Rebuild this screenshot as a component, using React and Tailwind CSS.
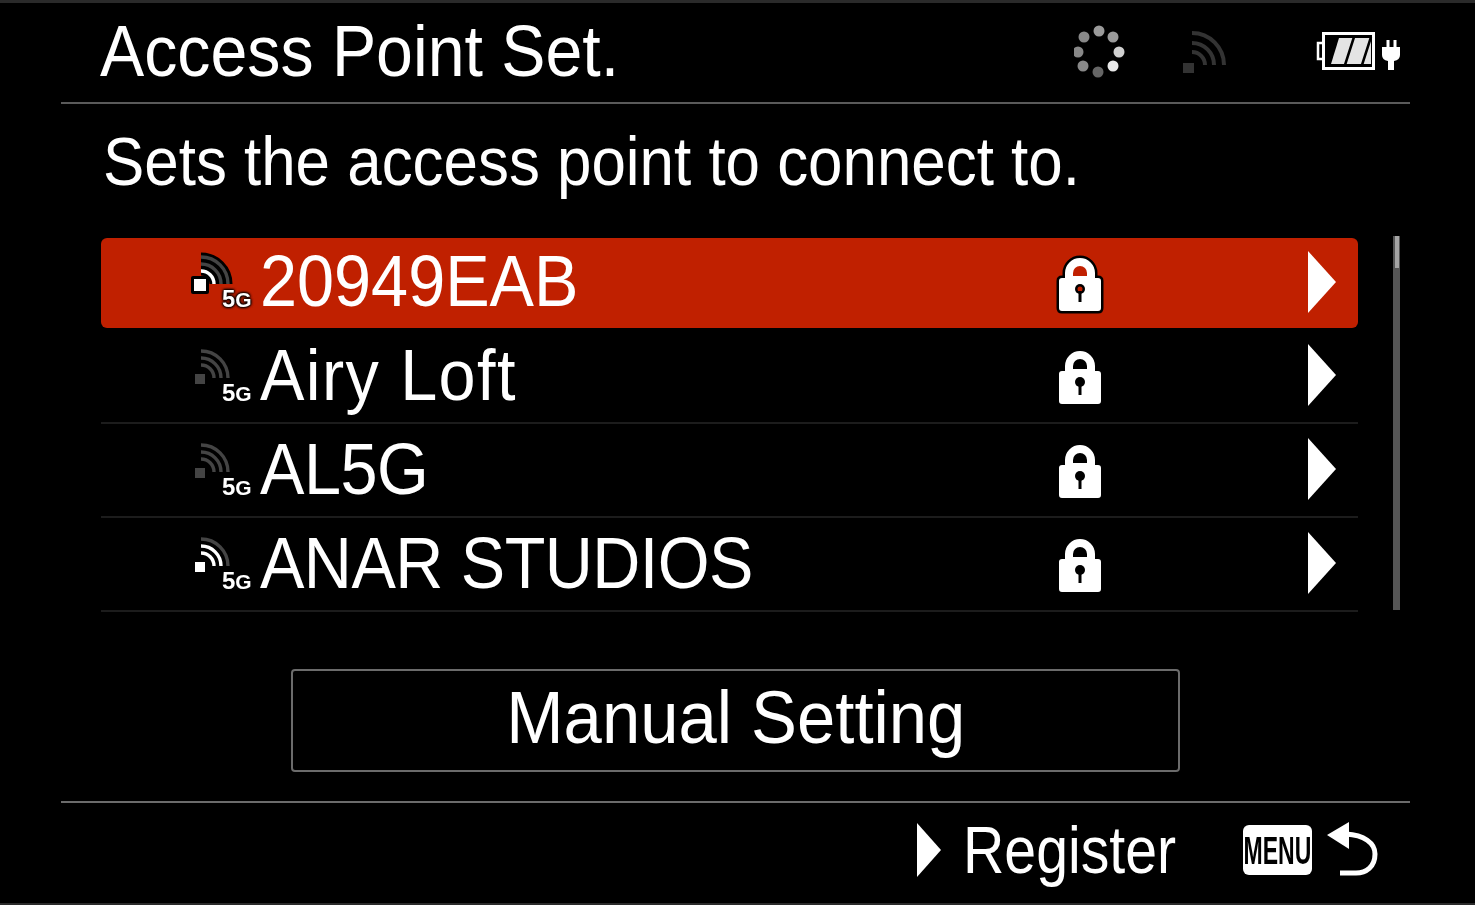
const rows = [
  { name: 'ROW0', label: '20949EAB', bars: 1, active: true },
  { name: 'ROW1', label: 'Airy Loft', bars: 0, spacing: 'tracking-[1.5px]' },
  { name: 'ROW2', label: 'AL5G', bars: 0, spacing: 'tracking-[-0.5px]' },
  { name: 'ROW3', label: 'ANAR STUDIOS', bars: 2, spacing: 'tracking-[-0.6px]' },
];

const Spinner = () => {
  const dots = [
    [25, 6, '#9a9a9a'], [39, 12, '#9a9a9a'], [45, 27, '#d0d0d0'], [39, 41, '#e8e8e8'],
    [24, 47, '#666666'], [9, 41, '#888888'], [4, 27, '#888888'], [10, 12, '#888888'],
  ];
  return (
    <svg width="52" height="56" viewBox="0 0 52 56" className="block">
      {dots.map(([cx, cy, fill]) => <circle key={`${cx}-${cy}`} cx={cx} cy={cy} r="5.5" fill={fill} />)}
    </svg>
  );
};

// arcs radiate from the lower-left dot, lit count depends on signal
const Wifi = ({ lit = 0, outline = false }) => {
  const arcs = ['M12 21 A13 13 0 0 1 25 34', 'M12 14 A20 20 0 0 1 32 34', 'M12 7 A27 27 0 0 1 39 34'];
  return (
    <svg width="46" height="46" viewBox="0 0 46 46" className="block">
      {outline && arcs.map((d) => <path key={d} d={d} fill="none" stroke="#000" strokeWidth="9" />)}
      {outline && <rect x="2" y="26" width="18" height="18" rx="2" fill="#000" />}
      {arcs.map((d, i) => (
        <path key={d} d={d} fill="none" stroke={i < lit ? '#fff' : '#444444'} strokeWidth="3.4" />
      ))}
      {outline
        ? <rect x="5" y="29" width="12" height="12" fill="#fff" />
        : <rect x="6" y="30" width="10" height="10" fill={lit > 0 ? '#fff' : '#444444'} />}
    </svg>
  );
};

const Lock = ({ outline }) => (
  <svg width="52" height="60" viewBox="0 0 52 60" className="block">
    <path
      d="M11 23 V18 A15 15 0 0 1 41 18 V23 H44 Q47 23 47 26 V53 Q47 56 44 56 H8 Q5 56 5 53 V26 Q5 23 8 23 Z"
      fill="#fff"
      stroke={outline ? '#000' : 'none'}
      strokeWidth="5"
      paintOrder="stroke"
    />
    <path d="M19 21 V18 A7 7 0 0 1 33 18 V21 Z" fill={outline ? '#c02000' : '#000'} />
    <circle cx="26" cy="34" r="5" fill="#000" />
    {outline && <circle cx="26" cy="34" r="2.5" fill="#c02000" />}
    <rect x="24.5" y="36" width="3" height="11" fill="#000" />
  </svg>
);

const Arrow = () => (
  <svg width="30" height="62" viewBox="0 0 30 62" className="block">
    <path d="M1 0 L29 31 L1 62 Z" fill="#fff" />
  </svg>
);

const Row = ({ label, bars, active, spacing = '' }) => (
  <div className={`relative isolate flex h-[94px] items-center pb-[2px] ${active ? '' : 'border-b-2 border-[#1c1c1c]'}`}>
    {active && <div className="absolute inset-x-0 inset-y-[2px] -z-10 rounded-md bg-[#c02000]" />}
    <div className="absolute left-[88px] top-[14px]">
      <Wifi lit={bars} outline={active} />
    </div>
    <span className={`absolute left-[121px] top-[50px] text-[24px] leading-[26px] font-bold text-white ${active ? '[text-shadow:0_0_3px_#000,0_0_3px_#000,0_0_3px_#000,0_0_2px_#000]' : ''}`}>
      5<span className="text-[21px]">G</span>
    </span>
    <span className={`ml-[159px] origin-left scale-x-[0.925] text-[72px] leading-none text-white ${active ? '-mt-[2px]' : ''} ${spacing}`}>{label}</span>
    <div className="ml-auto flex items-center">
      <div className="mt-[6px]"><Lock outline={active} /></div>
      <div className="ml-[201px] mr-[21px]"><Arrow /></div>
    </div>
  </div>
);

export default function App() {
  return (
    <div className="flex h-[905px] w-[1475px] flex-col overflow-hidden bg-black font-['Liberation_Sans',sans-serif] text-white blur-[0.5px]">
      <div className="h-[3px] bg-[#2a2a2a]" />

      <div className="ml-[61px] mr-[65px] flex h-[101px] items-center border-b-2 border-[#5a5a5a] pl-[39px]">
        <h1 className="-mt-[3px] origin-left scale-x-[0.92] text-[72px] leading-none">Access Point Set.</h1>
        <div className="ml-auto flex items-center">
          <Spinner />
          <div className="ml-[56px] mr-[88px]">
            <svg width="46" height="46" viewBox="0 0 46 46" className="block">
              <path d="M10 3 A32 32 0 0 1 42 35 M10 13 A22 22 0 0 1 32 35 M10 22 A13 13 0 0 1 23 35" fill="none" stroke="#333333" strokeWidth="4" />
              <rect x="1" y="33" width="11" height="10" fill="#333333" />
            </svg>
          </div>
          <svg width="84" height="38" viewBox="0 0 84 38" className="-mt-[3px] mr-[10px] block">
            <path d="M6 11 H2 V27 H6" fill="none" stroke="#fff" strokeWidth="2.5" />
            <rect x="7.5" y="1.5" width="50" height="35" fill="none" stroke="#fff" strokeWidth="3" />
            <path d="M15 32 L23 6 H55 V32 Z" fill="#e4e4e4" />
            <path d="M29 33 L38 5 M46 33 L55 5" stroke="#000" strokeWidth="2.5" />
            <path d="M72 8 V16 M79 8 V16" stroke="#fff" strokeWidth="3" />
            <path d="M66 15 H84 V23 Q84 28 78 29 V38 H72 V29 Q66 28 66 23 Z" fill="#fff" />
          </svg>
        </div>
      </div>

      <p className="ml-[103px] mt-[21px] h-[72px] origin-left scale-x-[0.91] text-[68px] leading-[72px] whitespace-nowrap">Sets the access point to connect to.</p>

      <div className="ml-[101px] mt-[39px] flex items-stretch">
        <div className="w-[1257px]">
          {rows.map((r) => <Row key={r.name} {...r} />)}
        </div>
        <div className="ml-[35px] h-[374px] w-[7px] bg-[#555555]">
          <div className="mx-auto h-[32px] w-[4px] bg-[#a5a5a5]" />
        </div>
      </div>

      <div className="ml-[291px] mt-[57px] flex h-[103px] w-[889px] items-center justify-center rounded border-2 border-[#6b6b6b] pb-[5px]">
        <span className="scale-x-[0.93] text-[74px] leading-none">Manual Setting</span>
      </div>

      <div className="ml-[61px] mr-[65px] mt-[29px] flex h-[100px] items-center border-t-2 border-[#6b6b6b] pb-[4px]">
        <svg width="26" height="54" viewBox="0 0 26 54" className="ml-[855px] block">
          <path d="M1 0 L25 27 L1 54 Z" fill="#fff" />
        </svg>
        <span className="ml-[21px] origin-left scale-x-[0.867] text-[66px] leading-none">Register</span>
        <span className="ml-[34px] flex h-[50px] w-[69px] items-center justify-center rounded-md bg-white text-[39px] leading-none font-bold text-black">
          <span className="scale-x-[0.59]">MENU</span>
        </span>
        <svg width="56" height="58" viewBox="0 0 56 58" className="ml-[14px] block">
          <path d="M1 14 L23 1 V28 Z" fill="#fff" />
          <path d="M20 13 C38 14 49 22 49 33 C49 46 40 52 30 52 H14" fill="none" stroke="#fff" strokeWidth="5" />
        </svg>
      </div>

      <div className="mt-auto h-[2px] bg-[#2a2a2a]" />
    </div>
  );
}
